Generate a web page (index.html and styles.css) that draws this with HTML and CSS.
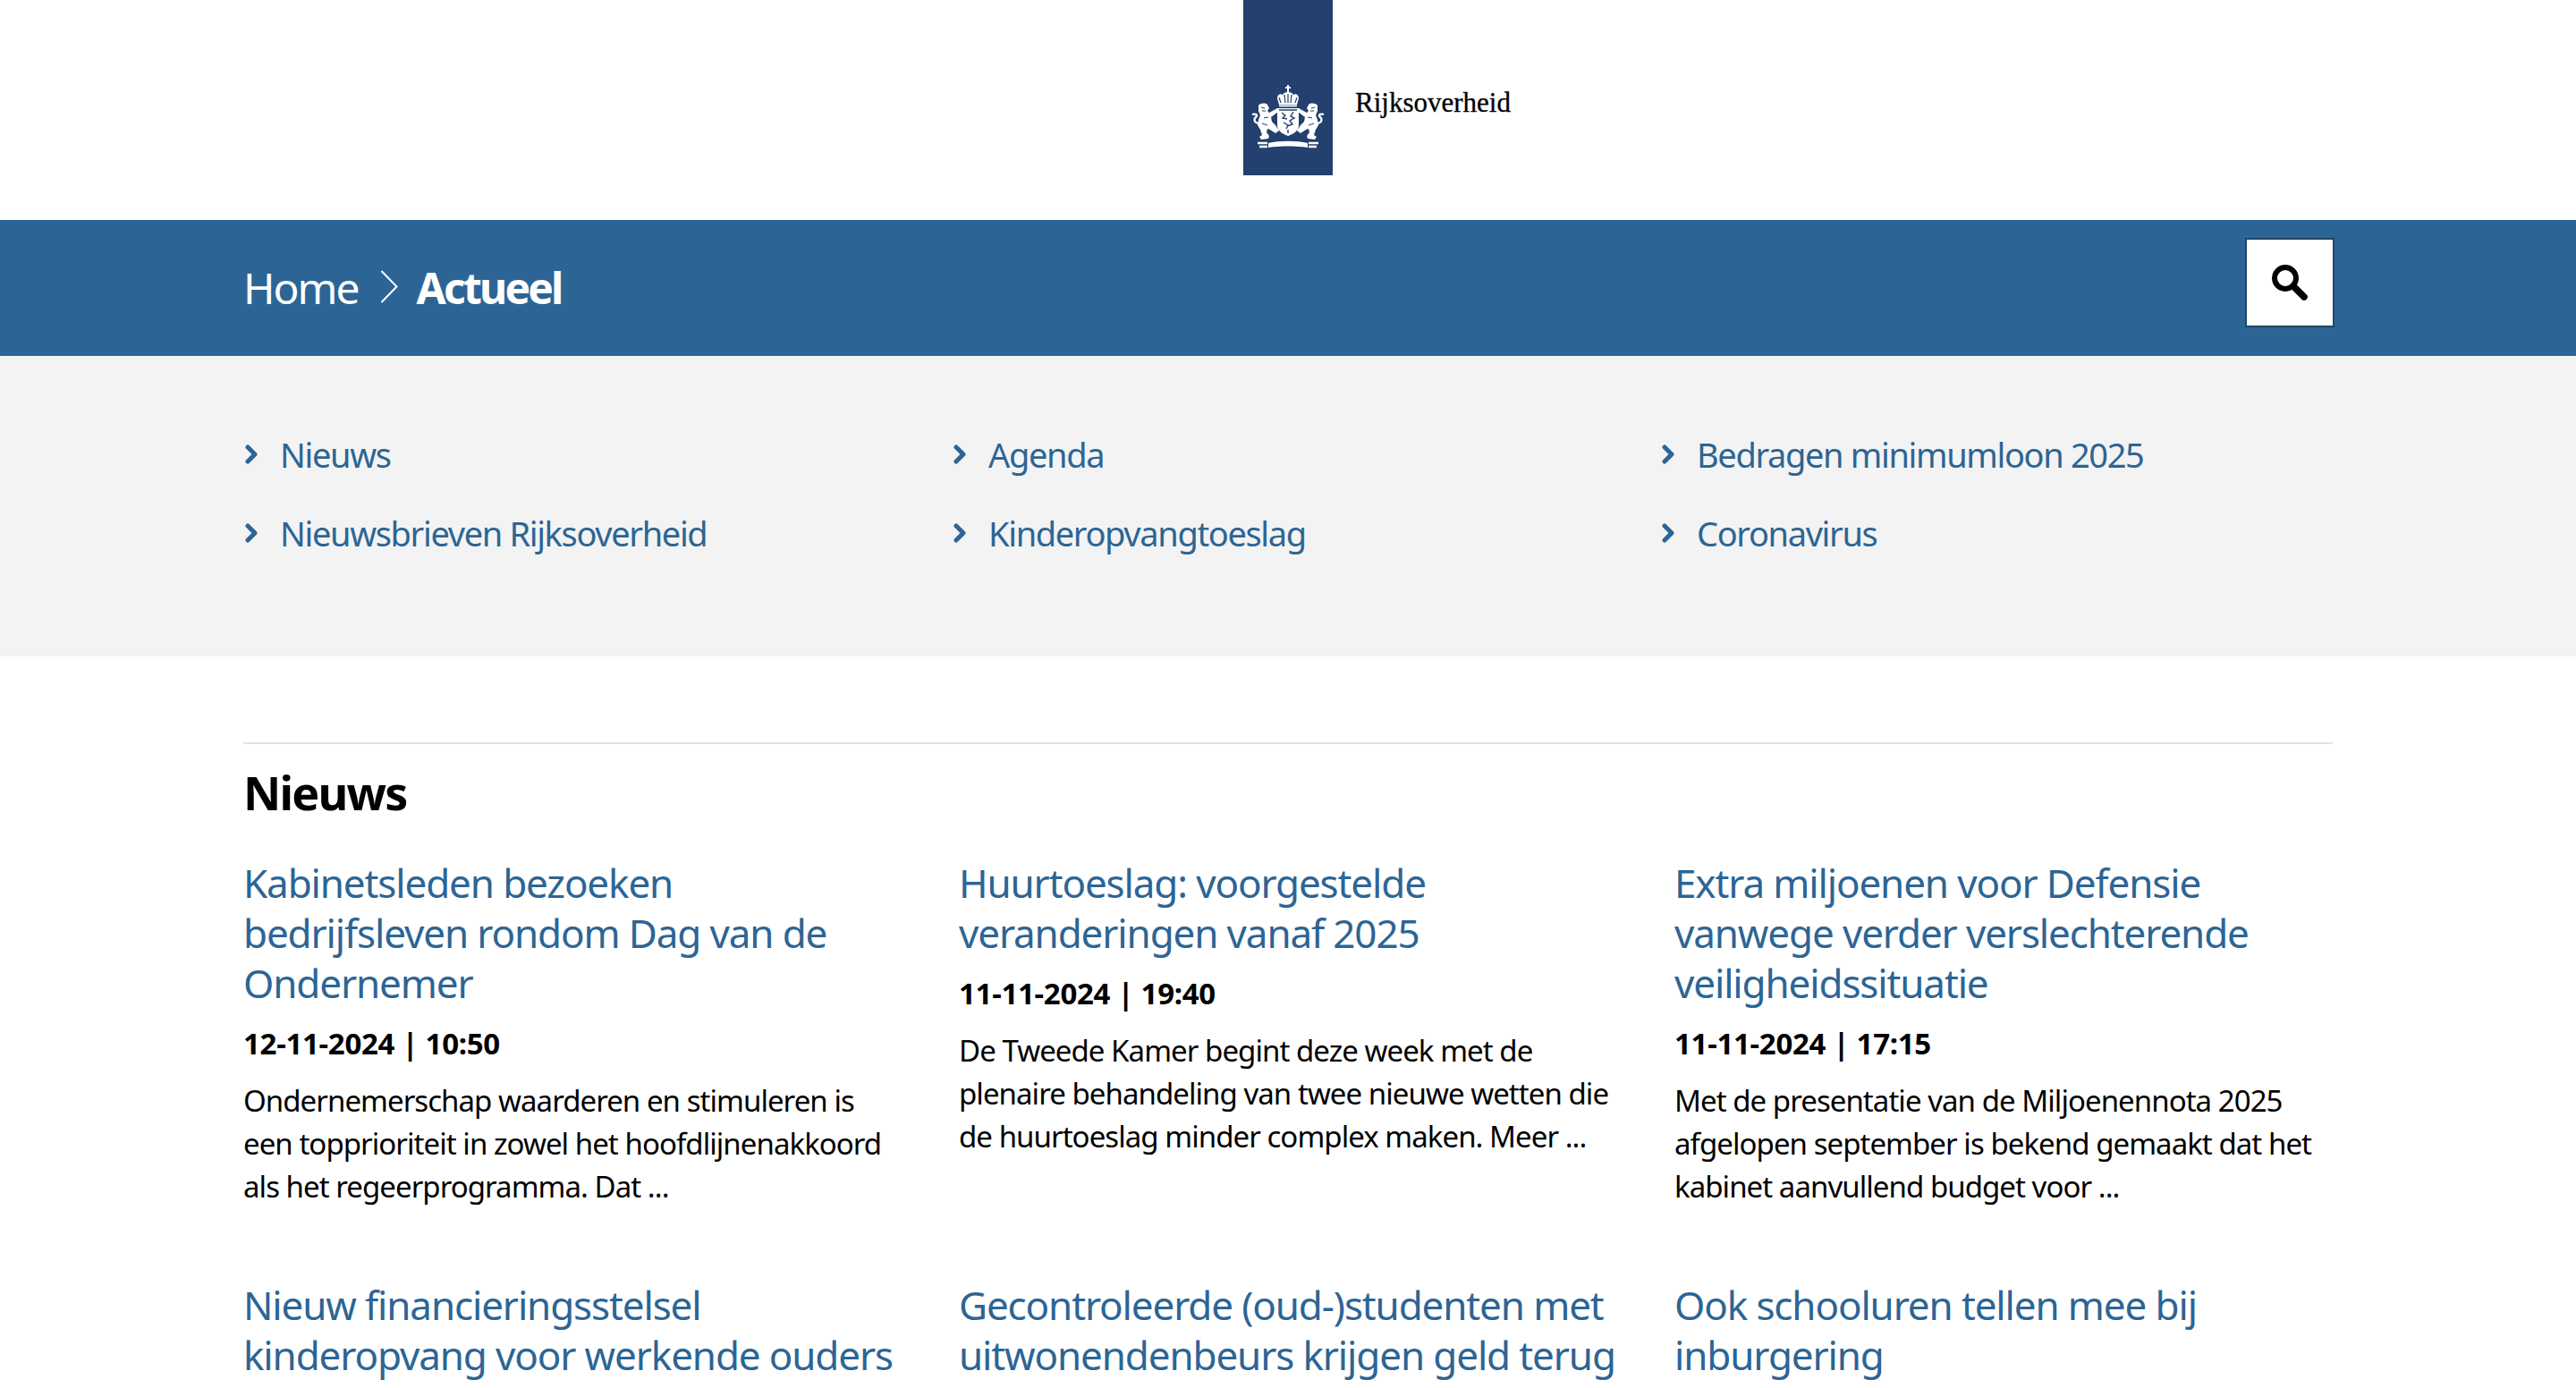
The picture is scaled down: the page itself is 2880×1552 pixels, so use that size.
FILE: index.html
```html
<!DOCTYPE html>
<html lang="nl">
<head>
<meta charset="utf-8">
<title>Actueel | Rijksoverheid.nl</title>
<link rel="stylesheet" href="styles.css">
</head>
<body>
<header class="logo-row">
  <span class="logo-band">
    <svg class="crest" viewBox="0 0 100 80" aria-hidden="true">
      <defs>
        <g id="lion">
          <path fill="#fff" d="M17 28C19 25 25 25 27 27L29 31 27 34 29 36 38 31 39 35 31 41 32 46 36 50 40 56 36 59 30 55 27 54 26 58 29 62 28 65 20 66 18 63 21 61 19 55 16 50 17 44 19 39 17 34Z"/>
          <path fill="none" stroke="#fff" stroke-width="2.200" d="M17 48C12 47 11 43 15 40 16 38 13 37 10 38"/>
          <path fill="none" stroke="#fff" stroke-width="2.500" d="M16 70H27M18 74H27"/>
          <path fill="none" stroke="#23406e" stroke-width="1" d="M20 30l4 1M21 34l4 0M21 48l6 2M23 42l5-1"/>
        </g>
      </defs>
      <use href="#lion"/>
      <use href="#lion" transform="matrix(-1 0 0 1 100 0)"/>
      <path fill="#fff" d="M49 5h2v2h2v2h-2v4h-2V9h-2V7h2z"/>
      <path fill="#fff" d="M38 20C38 16 41 14 44 16 46 13 48 13 50 13 52 13 54 13 56 16 59 14 62 16 62 20L60 27H40Z"/>
      <rect fill="#fff" x="40" y="27.500" width="20" height="1.800"/>
      <path fill="#fff" d="M38 31H62V50C62 57 55 60 50 62 45 60 38 57 38 50Z"/>
      <path fill="none" stroke="#23406e" stroke-width="1.200" d="M42 25l-2-6M47 25l-1-9M53 25l1-9M58 25l2-6M50 25V15"/>
      <path fill="none" stroke="#23406e" stroke-width="1.400" d="M40 33h20M43 36l4 3-3 3 5 1M56 35l-3 5 4 2-5 3 3 4-6 2M45 47l5 3-2 4M50 55v4"/>
      <path fill="#fff" d="M28 70C40 67 60 67 72 70V75C60 73 40 73 28 75Z"/>
    </svg>
  </span>
  <span class="logo-name">Rijksoverheid</span>
</header>

<nav class="bar">
  <ol class="crumbs">
    <li><a href="#">Home</a></li>
    <li class="crumb-sep" aria-hidden="true">
      <svg viewBox="0 0 20 38"><path d="M1.500 1l17 17.500L1.500 36" fill="none" stroke="#fff" stroke-width="2"/></svg>
    </li>
    <li class="crumb-current">Actueel</li>
  </ol>
  <button class="search" type="button" aria-label="Zoeken">
    <svg viewBox="0 0 42 42"><circle cx="16" cy="16" r="12" fill="none" stroke="#000" stroke-width="6"/><path d="M25 25l12 12" stroke="#000" stroke-width="7.500" stroke-linecap="round"/></svg>
  </button>
</nav>

<section class="quick">
  <ul class="quick-grid">
    <li><svg class="chev" viewBox="0 0 16 22"><path d="M5 3l8 8-8 8" fill="none" stroke="#2c6595" stroke-width="5" stroke-linecap="round" stroke-linejoin="round"/></svg><a href="#">Nieuws</a></li>
    <li><svg class="chev" viewBox="0 0 16 22"><path d="M5 3l8 8-8 8" fill="none" stroke="#2c6595" stroke-width="5" stroke-linecap="round" stroke-linejoin="round"/></svg><a href="#">Agenda</a></li>
    <li><svg class="chev" viewBox="0 0 16 22"><path d="M5 3l8 8-8 8" fill="none" stroke="#2c6595" stroke-width="5" stroke-linecap="round" stroke-linejoin="round"/></svg><a href="#">Bedragen minimumloon 2025</a></li>
    <li><svg class="chev" viewBox="0 0 16 22"><path d="M5 3l8 8-8 8" fill="none" stroke="#2c6595" stroke-width="5" stroke-linecap="round" stroke-linejoin="round"/></svg><a href="#">Nieuwsbrieven Rijksoverheid</a></li>
    <li><svg class="chev" viewBox="0 0 16 22"><path d="M5 3l8 8-8 8" fill="none" stroke="#2c6595" stroke-width="5" stroke-linecap="round" stroke-linejoin="round"/></svg><a href="#">Kinderopvangtoeslag</a></li>
    <li><svg class="chev" viewBox="0 0 16 22"><path d="M5 3l8 8-8 8" fill="none" stroke="#2c6595" stroke-width="5" stroke-linecap="round" stroke-linejoin="round"/></svg><a href="#">Coronavirus</a></li>
  </ul>
</section>

<main class="news">
  <h2 class="news-title">Nieuws</h2>
  <div class="news-grid">
    <article class="item">
      <h3><a href="#">Kabinetsleden bezoeken<br>bedrijfsleven rondom Dag van de<br>Ondernemer</a></h3>
      <p class="date">12-11-2024 | 10:50</p>
      <p class="summary">Ondernemerschap waarderen en stimuleren is<br>een topprioriteit in zowel het hoofdlijnenakkoord<br>als het regeerprogramma. Dat ...</p>
    </article>
    <article class="item">
      <h3><a href="#">Huurtoeslag: voorgestelde<br>veranderingen vanaf 2025</a></h3>
      <p class="date">11-11-2024 | 19:40</p>
      <p class="summary">De Tweede Kamer begint deze week met de<br>plenaire behandeling van twee nieuwe wetten die<br>de huurtoeslag minder complex maken. Meer ...</p>
    </article>
    <article class="item">
      <h3><a href="#">Extra miljoenen voor Defensie<br>vanwege verder verslechterende<br>veiligheidssituatie</a></h3>
      <p class="date">11-11-2024 | 17:15</p>
      <p class="summary">Met de presentatie van de Miljoenennota 2025<br>afgelopen september is bekend gemaakt dat het<br>kabinet aanvullend budget voor ...</p>
    </article>
    <article class="item">
      <h3><a href="#">Nieuw financieringsstelsel<br>kinderopvang voor werkende ouders</a></h3>
    </article>
    <article class="item">
      <h3><a href="#">Gecontroleerde (oud-)studenten met<br>uitwonendenbeurs krijgen geld terug</a></h3>
    </article>
    <article class="item">
      <h3><a href="#">Ook schooluren tellen mee bij<br>inburgering</a></h3>
    </article>
  </div>
</main>
</body>
</html>
```
FILE: styles.css
```css
* { box-sizing: border-box; }
html, body { margin: 0; padding: 0; height: 100%; overflow: hidden; background: #fff; }
body { font-family: "Noto Sans", "Open Sans", sans-serif; color: #000; }
a { color: inherit; text-decoration: none; }
ul, ol { list-style: none; margin: 0; padding: 0; }

.logo-row { height: 246px; display: grid; grid-template-columns: 1fr 100px 1fr; align-items: start; }
.logo-band { grid-column: 2; width: 100px; height: 196px; background: #23406e; display: flex; align-items: flex-end; padding-bottom: 26px; }
.crest { width: 100px; height: 80px; display: block; }
.logo-name { grid-column: 3; font-family: "Liberation Serif", serif; font-size: 31px; line-height: 36px; margin: 97px 0 0 25px; color: #000; -webkit-text-stroke: 0.3px #000; }

.bar { height: 152px; background: #2c6595; padding: 23px 270px 0 272px; display: flex; justify-content: space-between; align-items: flex-start; }
.crumbs { display: flex; align-items: center; height: 104px; font-size: 48px; letter-spacing: -2px; color: #fff; }
.crumb-sep { display: flex; margin: 0 21px 0 24px; }
.crumb-sep svg { width: 20px; height: 38px; display: block; }
.crumb-current { font-weight: 700; letter-spacing: -2.800px; }
.search { width: 100px; height: 100px; margin-top: -3px; background: #fff; border: 2px solid #1f4566; padding: 0; display: flex; align-items: center; justify-content: center; }
.search svg { width: 42px; height: 42px; display: block; }

.quick { height: 336px; background: #f3f3f3; padding: 86px 272px 0; }
.quick-grid { display: grid; grid-template-columns: repeat(3, 1fr); row-gap: 40px; width: 2376px; font-size: 38px; line-height: 48px; letter-spacing: -1.350px; color: #2c6595; }
.quick-grid li { display: flex; align-items: center; }
.chev { width: 16px; height: 22px; margin-right: 25px; flex: none; }

.news { margin: 96px 272px 0; border-top: 2px solid #e2e2e2; }
.news-title { font-size: 52px; line-height: 64px; font-weight: 700; letter-spacing: -1.800px; margin: 22px 0 0; }
.news-grid { display: grid; grid-template-columns: repeat(3, 736px); column-gap: 64px; margin-top: 41px; }
.item { min-height: 472px; }
.item h3 { margin: 0; font-size: 44px; line-height: 56px; font-weight: 400; letter-spacing: -1.130px; color: #2c6595; white-space: nowrap; }
.date { margin: 18px 0 0; font-size: 33px; line-height: 44px; font-weight: 700; letter-spacing: -0.300px; }
.summary { margin: 18px 0 0; font-size: 33px; line-height: 48px; letter-spacing: -0.950px; white-space: nowrap; }
```
